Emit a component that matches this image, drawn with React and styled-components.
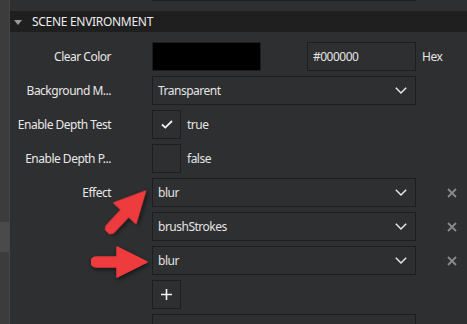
import React from "react";
import styled, { createGlobalStyle } from "styled-components";

const GlobalStyle = createGlobalStyle`
  html, body {
    margin: 0;
    padding: 0;
    background: #2e2f31;
  }
  body {
    font-family: "Noto Sans", "Open Sans", sans-serif;
    font-size: 12px;
    letter-spacing: -0.5px;
    color: #e6e6e6;
  }
`;

const Page = styled.div`
  position: relative;
  display: flex;
  width: 467px;
  height: 324px;
  overflow: hidden;
  background: #2e2f31;
`;

const Strip = styled.div`
  width: 9px;
  flex-shrink: 0;
  background: #3c3c3c;
  border-right: 1px solid #474747;
  display: flex;
  flex-direction: column;
`;

const StripBlock = styled.div`
  flex-shrink: 0;
  margin-top: 222px;
  height: 30px;
  background: #4a4a4a;
`;

const Panel = styled.div`
  flex: 1;
  display: flex;
  flex-direction: column;
  min-height: 0;
`;

const TopEdge = styled.div`
  flex-shrink: 0;
  margin-left: 142px;
  width: 264px;
  height: 1px;
  background: #1e1f20;
  margin-bottom: 10px;
`;

const SectionHeader = styled.div`
  flex-shrink: 0;
  height: 21px;
  background: #1f1f1f;
  display: flex;
  align-items: center;
  padding-left: 4px;
  gap: 10px;
  color: #ececec;
  font-size: 12px;
  letter-spacing: -0.3px;
`;

const Triangle = styled.span`
  width: 0;
  height: 0;
  border-left: 4px solid transparent;
  border-right: 4px solid transparent;
  border-top: 5px solid #9a9a9a;
  margin-top: 1px;
`;

const Rows = styled.div`
  flex-shrink: 0;
  display: flex;
  flex-direction: column;
  gap: 5px;
  padding-top: 10px;
`;

const Row = styled.div`
  flex-shrink: 0;
  display: flex;
  align-items: center;
  height: 29px;
`;

const Label = styled.div`
  width: 101px;
  margin-right: 41px;
  text-align: right;
  white-space: nowrap;
  color: #e8e8e8;
`;

const Field = styled.div`
  width: 264px;
  display: flex;
  align-items: center;
  justify-content: space-between;
`;

const Box = styled.div`
  box-sizing: border-box;
  height: 29px;
  width: ${(p) => p.$width || "264px"};
  border: 1px solid #1d1e1f;
  background: ${(p) => p.$fill || "#2e2f31"};
  display: flex;
  align-items: center;
  justify-content: space-between;
  padding: 0 8px 0 5px;
  color: #e4e4e4;
`;

const CheckBox = styled.div`
  box-sizing: border-box;
  width: 29px;
  height: 29px;
  border: 1px solid #1d1e1f;
  display: flex;
  align-items: center;
  justify-content: center;
`;

const CheckText = styled.span`
  margin-left: 6px;
  color: #e4e4e4;
`;

const Trail = styled.span`
  margin-left: ${(p) => p.$gap || "6px"};
  color: #e4e4e4;
  display: flex;
  align-items: center;
`;

const Arrow = styled.svg`
  position: absolute;
  left: ${(p) => p.$x}px;
  top: ${(p) => p.$y}px;
  transform: rotate(${(p) => p.$rot || 0}deg);
  transform-origin: 29px 17px;
  filter: drop-shadow(1px 2px 2px rgba(0, 0, 0, 0.55));
`;

const Chevron = () => (
  <svg width="12" height="7" viewBox="0 0 12 7">
    <polyline points="0.8,0.8 6,6 11.2,0.8" fill="none" stroke="#ececec" strokeWidth="1.4" />
  </svg>
);

const Close = () => (
  <svg width="10" height="10" viewBox="0 0 10 10">
    <path d="M1 1 L9 9 M9 1 L1 9" stroke="#8a8a8a" strokeWidth="1.8" />
  </svg>
);

const Select = ({ value }) => (
  <Box>
    <span>{value}</span>
    <Chevron />
  </Box>
);

const RedArrow = ({ x, y, rot }) => (
  <Arrow $x={x} $y={y} $rot={rot} width="58" height="34" viewBox="0 0 58 34">
    <path
      d="M5 12 L26 12 L26 2 L56 17 L26 32 L26 22 L5 22 A5 5 0 0 1 5 12 Z"
      fill="#ee3b3d"
      stroke="#ee3b3d"
      strokeWidth="1.5"
      strokeLinejoin="round"
    />
  </Arrow>
);

export default function App() {
  return (
    <Page>
      <GlobalStyle />
      <Strip>
        <StripBlock />
      </Strip>
      <Panel>
        <TopEdge />
        <SectionHeader>
          <Triangle />
          SCENE ENVIRONMENT
        </SectionHeader>
        <Rows>
          <Row>
            <Label>Clear Color</Label>
            <Field>
              <Box $width="109px" $fill="#000" />
              <Box $width="109px">#000000</Box>
            </Field>
            <Trail>Hex</Trail>
          </Row>
          <Row>
            <Label>Background M...</Label>
            <Field>
              <Select value="Transparent" />
            </Field>
          </Row>
          <Row>
            <Label>Enable Depth Test</Label>
            <CheckBox>
              <svg width="12" height="9" viewBox="0 0 12 9">
                <polyline points="1,4.5 4.3,7.6 11,1" fill="none" stroke="#f2f2f2" strokeWidth="1.8" />
              </svg>
            </CheckBox>
            <CheckText>true</CheckText>
          </Row>
          <Row>
            <Label>Enable Depth P...</Label>
            <CheckBox />
            <CheckText>false</CheckText>
          </Row>
          <Row>
            <Label>Effect</Label>
            <Field>
              <Select value="blur" />
            </Field>
            <Trail $gap="31px">
              <Close />
            </Trail>
          </Row>
          <Row>
            <Label />
            <Field>
              <Select value="brushStrokes" />
            </Field>
            <Trail $gap="31px">
              <Close />
            </Trail>
          </Row>
          <Row>
            <Label />
            <Field>
              <Select value="blur" />
            </Field>
            <Trail $gap="31px">
              <Close />
            </Trail>
          </Row>
          <Row>
            <Label />
            <CheckBox>
              <svg width="11" height="11" viewBox="0 0 11 11">
                <path d="M5.5 0 V11 M0 5.5 H11" stroke="#f2f2f2" strokeWidth="1.6" />
              </svg>
            </CheckBox>
          </Row>
          <Row>
            <Label />
            <Box />
          </Row>
        </Rows>
      </Panel>
      <RedArrow x={98} y={194} rot={-47} />
      <RedArrow x={91} y={245} rot={0} />
    </Page>
  );
}
